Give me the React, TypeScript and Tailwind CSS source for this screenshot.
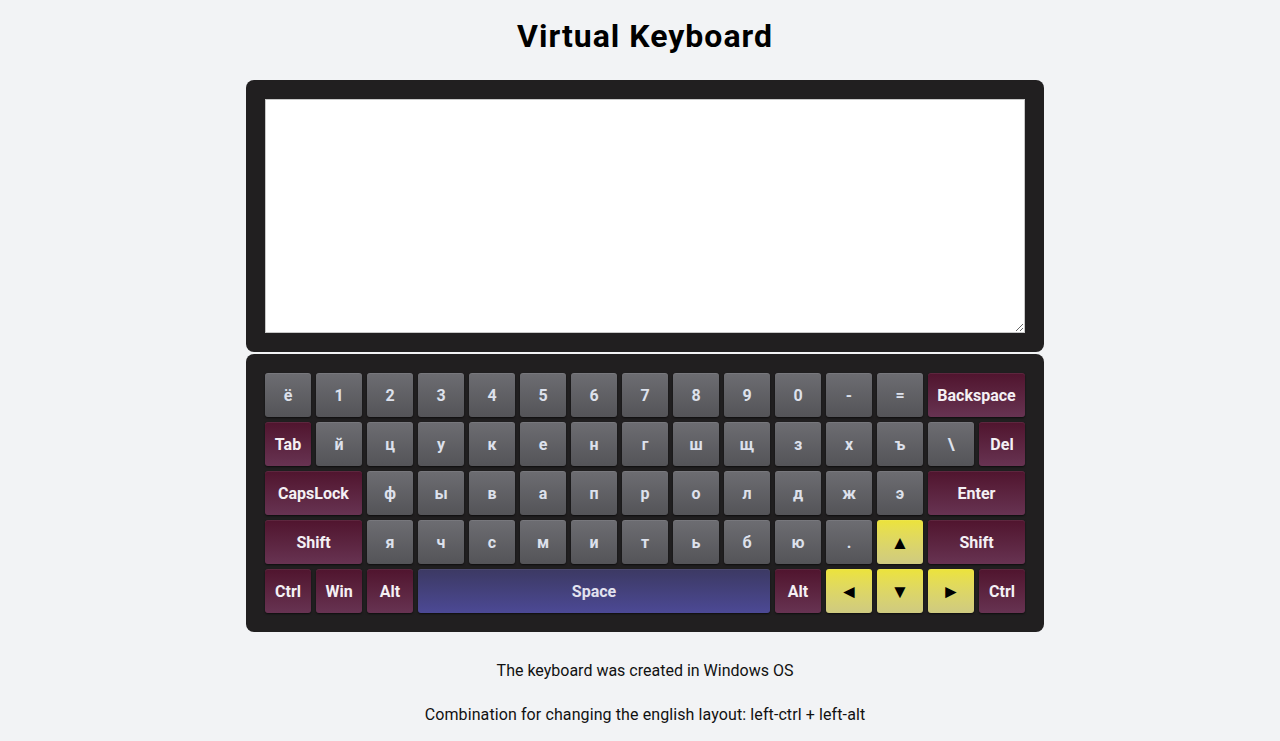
import React from "react";

type K = { l: string; s?: number; t?: "g" | "m" | "y" | "b" };

const rows: K[][] = [
  [
    { l: "ё" }, { l: "1" }, { l: "2" }, { l: "3" }, { l: "4" }, { l: "5" }, { l: "6" },
    { l: "7" }, { l: "8" }, { l: "9" }, { l: "0" }, { l: "-" }, { l: "=" },
    { l: "Backspace", s: 2, t: "m" },
  ],
  [
    { l: "Tab", t: "m" }, { l: "й" }, { l: "ц" }, { l: "у" }, { l: "к" }, { l: "е" }, { l: "н" },
    { l: "г" }, { l: "ш" }, { l: "щ" }, { l: "з" }, { l: "х" }, { l: "ъ" }, { l: "\\" },
    { l: "Del", t: "m" },
  ],
  [
    { l: "CapsLock", s: 2, t: "m" }, { l: "ф" }, { l: "ы" }, { l: "в" }, { l: "а" }, { l: "п" },
    { l: "р" }, { l: "о" }, { l: "л" }, { l: "д" }, { l: "ж" }, { l: "э" },
    { l: "Enter", s: 2, t: "m" },
  ],
  [
    { l: "Shift", s: 2, t: "m" }, { l: "я" }, { l: "ч" }, { l: "с" }, { l: "м" }, { l: "и" },
    { l: "т" }, { l: "ь" }, { l: "б" }, { l: "ю" }, { l: "." }, { l: "▲", t: "y" },
    { l: "Shift", s: 2, t: "m" },
  ],
  [
    { l: "Ctrl", t: "m" }, { l: "Win", t: "m" }, { l: "Alt", t: "m" },
    { l: "Space", s: 7, t: "b" }, { l: "Alt", t: "m" },
    { l: "◄", t: "y" }, { l: "▼", t: "y" }, { l: "►", t: "y" }, { l: "Ctrl", t: "m" },
  ],
];

const typeCls: Record<string, string> = {
  g: "bg-gradient-to-b from-[#6d6d72] to-[#545458] text-[#dde1ec] text-[16px]",
  m: "bg-gradient-to-b from-[#50142e] to-[#673352] text-[#f4f0f4] text-[16px]",
  y: "bg-gradient-to-b from-[#ece33a] to-[#cfca80] text-black text-[19px]",
  b: "bg-gradient-to-b from-[#3c3963] to-[#4c4995] text-[#e2e2ee] text-[16px]",
};

const spanCls: Record<number, string> = {
  1: "col-span-1",
  2: "col-span-2",
  7: "col-span-7",
};

export default function App() {
  return (
    <div
      className="min-h-[741px] bg-[#f2f3f5] pl-[10px] flex flex-col items-center"
      style={{ fontFamily: '"Roboto", "Noto Sans", sans-serif' }}
    >
      <h1 className="mt-[16px] text-[32px] leading-[40px] font-bold text-black tracking-[1px]">
        Virtual Keyboard
      </h1>
      <div className="mt-[24px] w-[798px]">
        <div className="bg-[#211f20] rounded-[8px] p-[19px]">
          <textarea className="block w-[760px] h-[234px] bg-white border border-[#c8c8c8] resize" />
        </div>
        <div className="mt-[2px] bg-[#211f20] rounded-[8px] p-[19px]">
          <div className="grid grid-cols-[repeat(15,46px)] auto-rows-[44px] gap-[5px]">
            {rows.flat().map((k, i) => (
              <div
                key={i}
                className={`${spanCls[k.s ?? 1]} ${typeCls[k.t ?? "g"]} pt-[2px] rounded-[3px] flex items-center justify-center font-bold shadow-[0_1px_2px_rgba(0,0,0,0.6),inset_0_1px_0_rgba(255,255,255,0.08)] select-none`}
              >
                {k.l}
              </div>
            ))}
          </div>
        </div>
      </div>
      <p className="mt-[29px] text-[16px] leading-[20px] text-[#111]">
        The keyboard was created in Windows OS
      </p>
      <p className="mt-[24px] text-[16px] leading-[20px] text-[#111] tracking-[0.1px]">
        Combination for changing the english layout: left-ctrl + left-alt
      </p>
    </div>
  );
}
